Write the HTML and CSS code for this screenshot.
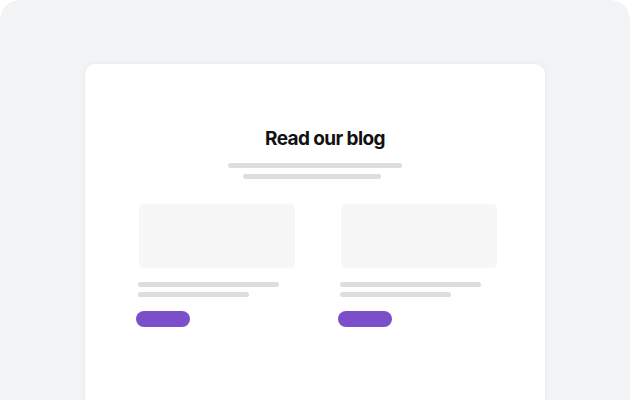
FILE: index.html
```html
<!DOCTYPE html>
<html>
<head>
<meta charset="utf-8">
<link rel="stylesheet" href="styles.css">
</head>
<body>
<div class="frame">
  <div class="card">
    <h1 class="title">Read our blog</h1>
    <div class="intro">
      <span class="bar bar-a"></span>
      <span class="bar bar-b"></span>
    </div>
    <div class="posts">
      <div class="post">
        <div class="thumb"></div>
        <span class="line line-a"></span>
        <span class="line line-b"></span>
        <span class="btn"></span>
      </div>
      <div class="post">
        <div class="thumb"></div>
        <span class="line line-a"></span>
        <span class="line line-b"></span>
        <span class="btn"></span>
      </div>
    </div>
  </div>
</div>
</body>
</html>
```
FILE: styles.css
```css
html, body {
  margin: 0;
  padding: 0;
  background: #ffffff;
}
.frame {
  width: 630px;
  height: 400px;
  overflow: hidden;
  background: #f2f3f5;
  border-radius: 20px 20px 0 0;
  padding-top: 64px;
  box-sizing: border-box;
  display: flex;
  justify-content: center;
  align-items: flex-start;
}
.card {
  width: 460px;
  height: 336px;
  background: #ffffff;
  border-radius: 10px 10px 0 0;
  box-shadow: 0 0 4px rgba(0, 0, 0, 0.06);
  display: flex;
  flex-direction: column;
  padding-top: 63px;
  box-sizing: border-box;
}
.title {
  margin: 0 0 0 20px;
  font-family: Inter, "Liberation Sans", sans-serif;
  font-weight: 700;
  font-size: 19px;
  line-height: 24px;
  letter-spacing: -0.6px;
  color: #111111;
  text-align: center;
}
.intro {
  display: flex;
  flex-direction: column;
  align-items: center;
  gap: 6px;
  margin-top: 12px;
}
.bar {
  display: block;
  height: 5px;
  border-radius: 3px;
  background: #dddddd;
}
.bar-a { width: 174px; }
.bar-b { width: 138px; margin-right: 6px; }
.posts {
  display: grid;
  grid-template-columns: 160px 160px;
  column-gap: 42px;
  padding-left: 51px;
  margin-top: 25px;
}
.post {
  display: flex;
  flex-direction: column;
  align-items: flex-start;
}
.thumb {
  width: 156px;
  height: 64px;
  margin-left: 3px;
  border-radius: 5px;
  background: #f7f7f7;
}
.line {
  display: block;
  height: 5px;
  margin-left: 2px;
  border-radius: 3px;
  background: #dddddd;
}
.line-a { width: 141px; margin-top: 14px; }
.line-b { width: 111px; margin-top: 5px; }
.btn {
  display: block;
  width: 54px;
  height: 16px;
  margin-top: 14px;
  border-radius: 8px;
  background: #7b4fc9;
}
```
